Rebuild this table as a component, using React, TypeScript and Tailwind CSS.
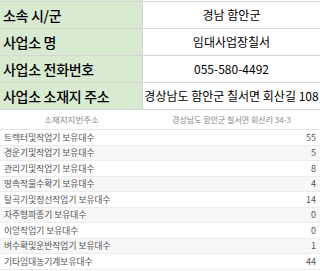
const font = { fontFamily: '"Noto Sans CJK KR", "Noto Sans", sans-serif' };

const info = [
  { label: '소속 시/군', value: '경남 함안군' },
  { label: '사업소 명', value: '임대사업장칠서' },
  { label: '사업소 전화번호', value: '055-580-4492' },
  { label: '사업소 소재지 주소', value: '경상남도 함안군 칠서면 회산길 108' },
];

const counts = [
  { label: '트렉터및작업기 보유대수', value: 55 },
  { label: '경운기및작업기 보유대수', value: 5 },
  { label: '관리기및작업기 보유대수', value: 8 },
  { label: '땅속작물수확기 보유대수', value: 4 },
  { label: '탈곡기및정선작업기 보유대수', value: 14 },
  { label: '자주형파종기 보유대수', value: 0 },
  { label: '이앙작업기 보유대수', value: 0 },
  { label: '벼수확및운반작업기 보유대수', value: 1 },
  { label: '기타임대농기계보유대수', value: 44 },
];

export default function App() {
  return (
    <div className="w-[320px] h-[271px] overflow-hidden bg-white" style={font}>
      {/* top info sheet */}
      <div className="grid grid-cols-[143px_1fr] h-px">
        <div className="bg-[#d9ead3] border-r border-[#d6d6d6]" />
        <div />
      </div>
      <div className="border-t border-[#d6d6d6]">
        {info.map((row) => (
          <div key={row.label} className="grid grid-cols-[143px_1fr] h-[27px] border-b border-[#d6d6d6]">
            <div className="bg-[#d9ead3] border-r border-[#d6d6d6] flex items-center pl-[3px] text-[14px] font-medium text-black tracking-[-0.3px] whitespace-nowrap">
              {row.label}
            </div>
            <div className="flex items-center justify-center text-[12px] text-black whitespace-nowrap overflow-visible">
              {row.value}
            </div>
          </div>
        ))}
      </div>

      {/* detail table */}
      <div className="grid grid-cols-[143px_1fr] h-[20px] border-b border-[#e6e6e6] text-[#888]">
        <div className="flex items-center justify-center text-[8.5px]">소재지지번주소</div>
        <div className="flex items-center justify-center text-[8px]">경상남도 함안군 칠서면 회산리 34-3</div>
      </div>
      {counts.map((row, i) => (
        <div
          key={row.label}
          className={`flex items-center justify-between h-[15.5px] border-b border-[#ececec] px-[4px] text-[8.75px] text-[#555] ${
            i % 2 === 1 ? 'bg-[#f7f7f7]' : 'bg-white'
          }`}
        >
          <span>{row.label}</span>
          <span className="text-[9px]">{row.value}</span>
        </div>
      ))}
    </div>
  );
}
